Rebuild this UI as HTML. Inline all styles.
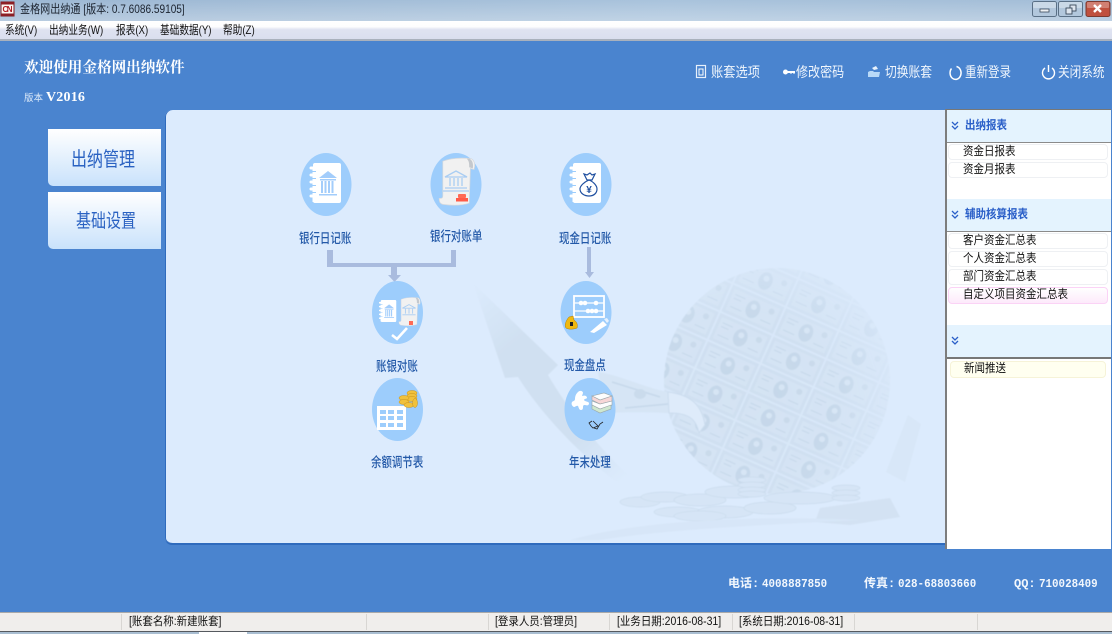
<!DOCTYPE html>
<html lang="zh"><head><meta charset="utf-8"><title>金格网出纳通</title>
<style>
html,body{margin:0;padding:0;width:1112px;height:634px;overflow:hidden;background:#4a84cf}
body{position:relative;font-family:"Liberation Sans","Noto Sans CJK SC",sans-serif}
div{position:absolute}
.t{position:absolute;white-space:nowrap;transform-origin:0 0;line-height:1}
.m{font-size:12px;color:#111;top:24px;transform:scaleX(.805)}
.tb{font-size:14px;color:#f0f6fd;top:65px;transform:scaleX(.86)}
.lb{font-size:13.5px;color:#2359a8;transform:scaleX(.775);font-weight:500}
.r{font-size:12px;color:#111;left:963px;transform:scaleX(.875)}
.rh{font-size:12px;color:#2a5fc8;font-weight:700;left:965px;transform:scaleX(.875)}
.it{left:948px;width:158px;border:1px solid #eef0f3;border-radius:4px;background:#fff}
.s{font-size:11.5px;color:#111;top:617px;transform:scaleX(.91)}
.ft{font-family:"Liberation Mono","Noto Sans CJK SC",monospace;font-weight:700;font-size:12px;color:#f2f7fd;top:578px}
.fn{transform:scaleX(.905)}
.sep{top:614px;width:1px;height:16px;background:#d8d6d3}
</style></head><body>
<div style="left:0;top:0;width:1112px;height:21px;background:linear-gradient(90deg,#9cb7d3,#a9c3dc 60%,#a3bdd7)"></div>
<div style="left:0;top:0;width:1112px;height:21px;background:linear-gradient(180deg,rgba(255,255,255,0),rgba(255,255,255,.28))"></div>
<div style="left:0;top:21px;width:1112px;height:19px;background:linear-gradient(180deg,#fff 0,#fdfdfe 30%,#dfe3f1 45%,#d9deee 100%)"></div>
<div style="left:0;top:39px;width:1112px;height:2px;background:#a9b1bd"></div>

<div style="left:165px;top:110px;width:780px;height:433px;background:#dcebfd;border-radius:7px 0 0 7px;border-bottom:2px solid #2f6bbd;box-shadow:inset 1px 0 0 #2f6bbd"></div>

<div style="left:48px;top:129px;width:113px;height:57px;background:linear-gradient(180deg,#fff,#c9e2fb);border-bottom-left-radius:5px"></div>
<div style="left:48px;top:192px;width:113px;height:57px;background:linear-gradient(180deg,#fff,#c9e2fb);border-bottom-left-radius:5px"></div>

<div style="left:945px;top:109px;width:166px;height:440px;background:#fff;border-left:2px solid #7d7d7d;box-sizing:border-box;border-top:1px solid #777"></div>
<div style="left:947px;top:110px;width:164px;height:32px;background:#e4f3fe;border-bottom:1px solid #8b8b8b"></div>
<div style="left:947px;top:199px;width:164px;height:32px;background:#e4f3fe;border-bottom:1px solid #8b8b8b"></div>
<div style="left:947px;top:325px;width:164px;height:32px;background:#e4f3fe;border-bottom:2px solid #777"></div>
<div class="it" style="top:144px;height:14px"></div>
<div class="it" style="top:162px;height:14px"></div>
<div class="it" style="top:233px;height:14px"></div>
<div class="it" style="top:251px;height:14px"></div>
<div class="it" style="top:269px;height:14px"></div>
<div class="it" style="top:287px;height:15px;border-color:#fbd3f6;background:linear-gradient(180deg,#fff,#fdeafb)"></div>
<div class="it" style="left:950px;width:154px;top:361px;height:15px;border-color:#f6f3d8;background:#fffff0"></div>

<div style="left:0;top:612px;width:1112px;height:1px;background:#a9a9a9"></div>
<div style="left:0;top:613px;width:1112px;height:18px;background:#f0eeec"></div>
<div style="left:0;top:631px;width:1112px;height:1px;background:#55595f"></div>
<div style="left:0;top:632px;width:1112px;height:2px;background:#a9bed2"></div>
<div style="left:199px;top:632px;width:48px;height:2px;background:#fff"></div>
<div class="sep" style="left:121px"></div><div class="sep" style="left:366px"></div><div class="sep" style="left:488px"></div><div class="sep" style="left:609px"></div><div class="sep" style="left:732px"></div><div class="sep" style="left:854px"></div><div class="sep" style="left:977px"></div>

<svg width="1112" height="634" viewBox="0 0 1112 634" style="position:absolute;left:0;top:0">
<defs>
<pattern id="bill" width="58" height="31" patternUnits="userSpaceOnUse" patternTransform="rotate(24 777 383)">
<rect width="58" height="31" fill="#d8e7f8"/>
<rect x="1" y="1" width="56" height="29" fill="#cfdff0"/>
<rect x="4" y="4" width="50" height="23" fill="#d4e3f3"/>
<ellipse cx="29" cy="15.500" rx="7" ry="9" fill="#c5d7e9"/><circle cx="29" cy="13" r="3" fill="#d6e5f4"/>
<circle cx="47" cy="10" r="3" fill="#c8d9ea"/><path d="M7 9h11M7 13h8M7 22h12M40 22h11" stroke="#c4d6e8" stroke-width="1"/>
</pattern>
<radialGradient id="fade" cx=".36" cy=".6" r=".75"><stop offset="0" stop-color="#fff"/><stop offset=".55" stop-color="#fff" stop-opacity=".9"/><stop offset=".85" stop-color="#fff" stop-opacity=".45"/><stop offset="1" stop-color="#fff" stop-opacity=".1"/></radialGradient>
<mask id="gm"><circle cx="777" cy="381" r="113" fill="url(#fade)"/></mask>
<filter id="soft" x="-5%" y="-5%" width="110%" height="110%"><feGaussianBlur stdDeviation=".6"/></filter>
<linearGradient id="ar" x1="0" y1="0" x2=".7" y2="1"><stop offset="0" stop-color="#dcebfd"/><stop offset=".3" stop-color="#d0e0f1"/><stop offset=".75" stop-color="#d0e0f1"/><stop offset="1" stop-color="#dcebfd"/></linearGradient>
<g id="nb"><rect x="-13" y="-22" width="28" height="40" rx="2" fill="#fff"/><path d="M-13-17v34" stroke="#fff"/><g fill="none" stroke="#fff" stroke-width="3" stroke-linecap="round"><path d="M-15-17h5M-15-10h5M-15-3h5M-15 4h5M-15 11h5"/></g><path d="M-16-13.500h6M-16-6.500h6M-16 .5h6M-16 7.500h6" stroke="#9dcdfc" stroke-width="1"/></g>
<g id="bk" fill="#a3cdfb"><path d="M0-12L9-5H-9z"/><rect x="-8" y="-4" width="16" height="1.500"/><path d="M-7-2h2v12h-2zM-3.500-2h2v12h-2zM0-2h2v12h-2zM3.500-2h2v12h-2z"/><rect x="-9" y="11" width="18" height="1.500"/></g>
<g id="st"><path d="M-11-19C-3-22 5-22 13-21c3 2 3 6 2 9l-3-1-1 29c-6 2-14 2-22 1-3-1-3-3-3-5 2 0 3 0 3-2z" fill="#f1f1f1" stroke="#d5d8dc" stroke-width=".6"/><path d="M9-21c3-1 6 2 5 8l-3-1c0-3 0-5-2-7z" fill="#c4c8cd"/></g>
</defs>

<g filter="url(#soft)">
<!-- background arrow -->
<path d="M473 283L558 365 548 375C580 430 625 475 655 498L637 497C590 465 545 420 518 377L505 378z" fill="url(#ar)"/>
<!-- globe -->
<g mask="url(#gm)"><rect x="660" y="265" width="235" height="235" fill="url(#bill)"/></g>
<!-- bill ribbon -->
<path d="M598 372C620 375 645 388 668 392C690 394 702 405 705 420L700 432C695 420 690 415 668 413C640 412 625 412 612 413C605 400 600 385 598 372z" fill="#d6e5f5"/>
<path d="M612 382L660 397M625 408L668 404" stroke="#c6d8ea" stroke-width="1.500" fill="none"/>
<ellipse cx="640" cy="394" rx="6" ry="5" fill="#cadbec"/>
<path d="M668 392C692 395 702 406 705 425l-6 8c-3-14-10-20-30-20z" fill="#deebfa" stroke="#cbdcee"/>
<!-- flying bill -->
<path d="M908 415L921 424 905 482 886 472z" fill="#d8e7f8"/>
<!-- coins -->
<g fill="#d6e5f6" stroke="#cbdced" stroke-width=".7">
<ellipse cx="640" cy="502" rx="20" ry="5"/><ellipse cx="665" cy="497" rx="24" ry="5"/><ellipse cx="700" cy="500" rx="26" ry="6"/><ellipse cx="735" cy="492" rx="30" ry="6"/><ellipse cx="678" cy="512" rx="24" ry="5"/><ellipse cx="725" cy="512" rx="28" ry="6"/><ellipse cx="770" cy="508" rx="26" ry="6"/><ellipse cx="700" cy="516" rx="26" ry="5"/><ellipse cx="800" cy="498" rx="36" ry="6"/>
<ellipse cx="752" cy="480" rx="14" ry="3"/><ellipse cx="752" cy="485" rx="14" ry="3"/><ellipse cx="752" cy="490" rx="14" ry="3"/><ellipse cx="752" cy="494" rx="14" ry="3"/>
<ellipse cx="846" cy="488" rx="14" ry="3"/><ellipse cx="846" cy="493" rx="14" ry="3"/><ellipse cx="846" cy="498" rx="14" ry="3"/>
</g>
<path d="M820 508L890 498 900 517 850 525 815 522z" fill="#d3e2f3"/>
<path d="M570 540C640 520 760 515 860 520C760 525 660 530 600 540z" fill="#d7e6f8"/>
</g>

<!-- connectors -->
<g fill="#a9bbde">
<rect x="327" y="250" width="6" height="17"/><rect x="327" y="263" width="129" height="4"/><rect x="451" y="250" width="5" height="17"/>
<rect x="391" y="267" width="6" height="9"/><path d="M388 275h13l-6.500 7z"/>
<rect x="587" y="247" width="4" height="25"/><path d="M585 272h9l-4.500 6z"/>
</g>

<!-- ovals -->
<g fill="#9dcdfc">
<ellipse cx="326" cy="184.500" rx="25.500" ry="31.500"/><ellipse cx="456" cy="184.500" rx="25.500" ry="31.500"/><ellipse cx="586" cy="184.500" rx="25.500" ry="31.500"/>
<ellipse cx="397.500" cy="312.500" rx="25.500" ry="31.500"/><ellipse cx="586" cy="312.500" rx="25.500" ry="31.500"/>
<ellipse cx="397.500" cy="409.500" rx="25.500" ry="31.500"/><ellipse cx="590" cy="409.500" rx="25.500" ry="31.500"/>
</g>

<!-- 1 bank notebook -->
<use href="#nb" x="326" y="185"/><use href="#bk" x="328" y="183"/>
<!-- 2 statement -->
<g transform="translate(456 184) scale(1.200)"><use href="#st"/></g>
<g transform="translate(456 180)" fill="none" stroke="#a9cdf3" stroke-width="1.300"><path d="M-11-3L0-9 11-3zM-6-2v8M-2-2v8M2-2v8M6-2v8M-11 8h22M-13 11h26"/></g>
<rect x="458" y="194" width="8" height="4" rx="1" fill="#ff6a55"/><rect x="456" y="198" width="12" height="3.500" fill="#ff5a48"/>
<!-- 3 money bag notebook -->
<use href="#nb" x="586" y="185"/>
<g transform="translate(0 -4)" fill="#fff" stroke="#1f4f9f" stroke-width="1.200"><path d="M589 184c-5 2-9 6-9 9 0 4 4 7 9 7s8-3 8-7c0-3-3-7-8-9z"/><path d="M584 178l3 1 3-2 2 2 3-1-3 6h-5z"/></g>
<text x="589" y="193" font-size="10" font-weight="700" fill="#1f4f9f" text-anchor="middle" font-family="Liberation Sans">¥</text>
<!-- 4 reconcile -->
<g transform="translate(388 311) scale(.55)"><use href="#nb" x="0" y="2"/><use href="#bk" x="2" y="0"/></g>
<g transform="translate(409 313) scale(.72)"><use href="#st"/></g>
<g transform="translate(409 310) scale(.6)" fill="none" stroke="#a9cdf3" stroke-width="1.500"><path d="M-11-3L0-9 11-3zM-6-2v8M0-2v8M6-2v8M-11 8h22"/></g>
<rect x="409" y="321" width="4" height="4" fill="#ff6a55"/>
<path d="M392 335l5 4 10-11" fill="none" stroke="#fff" stroke-width="2.600"/>
<!-- 5 abacus -->
<rect x="574" y="296" width="30" height="21" fill="none" stroke="#fff" stroke-width="1.800"/>
<path d="M574 303h30M574 311h30" stroke="#fff" stroke-width="1.200"/>
<g fill="#fff"><circle cx="581" cy="303" r="2.300"/><circle cx="585" cy="303" r="2.300"/><circle cx="596" cy="303" r="2.300"/><circle cx="588" cy="311" r="2.300"/><circle cx="592" cy="311" r="2.300"/><circle cx="596" cy="311" r="2.300"/></g>
<path d="M590 332l13-11 4 4-13 8z" fill="#fff"/><path d="M604 319l3-1 2 3-2 2z" fill="#e8f2fd"/>
<path d="M569 317l4-1 1 4c3 2 4 5 3 8-2 1-8 2-11 0-2-2 0-8 3-11z" fill="#f0b90f" stroke="#b27d08" stroke-width=".5"/><rect x="570" y="322" width="3" height="4" fill="#222"/>
<!-- 6 table + coins -->
<rect x="377" y="406" width="29" height="24" fill="#fff"/>
<g fill="#9dcdfc"><rect x="380" y="410" width="6" height="4"/><rect x="388" y="410" width="6" height="4"/><rect x="397" y="410" width="6" height="4"/><rect x="380" y="416" width="6" height="4"/><rect x="388" y="416" width="6" height="4"/><rect x="397" y="416" width="6" height="4"/><rect x="380" y="423" width="6" height="4"/><rect x="388" y="423" width="6" height="4"/><rect x="397" y="423" width="6" height="4"/></g>
<g fill="#f0c13c" stroke="#c8921b" stroke-width=".5"><ellipse cx="412" cy="393" rx="5" ry="2.500"/><ellipse cx="412" cy="396" rx="5" ry="2.500"/><ellipse cx="412" cy="399" rx="5" ry="2.500"/><ellipse cx="404" cy="398" rx="5" ry="2.500"/><ellipse cx="404" cy="402" rx="5" ry="2.500"/><ellipse cx="409" cy="405" rx="5" ry="2.500"/><ellipse cx="415" cy="403" rx="2.500" ry="4.500"/></g>
<!-- 7 puzzle books glasses -->
<path d="M578 392c2-2 5-1 5 1l-1 3c3-1 5 0 5 2-1 1-3 1-3 2 1 2 4 1 5 3 0 2-1 3-4 2-1 0-2 0-2 2 0 1 0 3-2 3-2 0-2-2-3-4-1-1-3 1-4 1-2-1-3-3-2-5 1-1 3-1 3-3 0-3 1-5 3-7z" fill="#fff"/>
<g stroke="#9aa5a8" stroke-width=".6"><path d="M592 396l12-3 8 3-12 4z" fill="#fdfdfd"/><path d="M592 396v4l8 4 12-3v-5l-12 4z" fill="#f7d7d7"/><path d="M592 401v4l8 4 12-4v-4l-12 3z" fill="#fdfdfd"/><path d="M592 405v4l8 4 11-4v-4l-11 4z" fill="#cfe8cf"/></g>
<g fill="none" stroke="#222" stroke-width=".8"><path d="M592 421l-3 2 2 3 2 2 5-2-5-5M594 428l3 1 3-5 3-2"/></g>

<!-- right panel chevrons -->
<g fill="none" stroke="#2a5fc8" stroke-width="1.300">
<path d="M952 122l3 3 3-3M952 126l3 3 3-3"/><path d="M952 211l3 3 3-3M952 215l3 3 3-3"/><path d="M952 337l3 3 3-3M952 341l3 3 3-3"/>
</g>

<!-- logo -->
<rect x="1" y="2" width="13" height="14" fill="#fbf7f3" stroke="#7c1d22"/>
<rect x="1" y="2" width="13" height="2.500" fill="#8c1f25"/><rect x="1" y="13.500" width="13" height="2.500" fill="#8c1f25"/>
<text x="2.500" y="12" font-size="8" font-weight="700" fill="#b01c24" font-family="Liberation Sans" textLength="10">CN</text>

<!-- window buttons -->
<g stroke="#5a7086"><rect x="1032.500" y="1.500" width="24" height="15" rx="2" fill="#b2c7dc"/><rect x="1058.500" y="1.500" width="24" height="15" rx="2" fill="#b2c7dc"/><rect x="1086" y="1.500" width="24" height="15" rx="2" fill="#c0503e" stroke="#7c3a30"/></g>
<rect x="1033" y="2" width="23" height="6" rx="1" fill="#fff" opacity=".32"/><rect x="1059" y="2" width="23" height="6" rx="1" fill="#fff" opacity=".32"/><rect x="1087" y="2" width="22" height="6" rx="1" fill="#fff" opacity=".28"/>
<rect x="1040" y="9" width="9" height="3" fill="#eef1f4" stroke="#39495a" stroke-width=".8"/>
<g fill="#dde5ee" stroke="#39495a" stroke-width=".9"><rect x="1070" y="5" width="6" height="6"/><rect x="1066" y="8" width="6" height="6"/></g>
<path d="M1094 5l7 7M1101 5l-7 7" stroke="#fff" stroke-width="2.400"/>

<!-- toolbar icons -->
<rect x="696.500" y="65.500" width="9" height="12" fill="none" stroke="#e7f0fb" stroke-width="1.200"/><rect x="699" y="69" width="4" height="6" fill="none" stroke="#fff"/>
<path d="M785 72h10" stroke="#fff" stroke-width="2"/><circle cx="785.500" cy="72" r="2.500" fill="#fff"/><path d="M791 72v2M794 72v2" stroke="#fff"/>
<path d="M868 77v-5l2-1h3l1 1h6l-1 5z" fill="#b9d9f7"/><path d="M872 68l4-2 2 3-4 1z" fill="#e8f2fc"/>
<path d="M951.500 68.500a5.500 6.500 0 1 0 5-2" fill="none" stroke="#fff" stroke-width="1.500"/>
<path d="M1045 68a6 6 0 1 0 7 0" fill="none" stroke="#fff" stroke-width="1.400"/><path d="M1048.500 65v7" stroke="#fff" stroke-width="1.400"/>
</svg>

<!-- text -->
<span class="t" style="left:20px;top:3px;font-size:12px;color:#1c2430;transform:scaleX(.84)">金格网出纳通 [版本: 0.7.6086.59105]</span>
<span class="t m" style="left:5px">系统(V)</span>
<span class="t m" style="left:49px">出纳业务(W)</span>
<span class="t m" style="left:116px">报表(X)</span>
<span class="t m" style="left:160px">基础数据(Y)</span>
<span class="t m" style="left:223px">帮助(Z)</span>

<span class="t" style="left:24px;top:61px;font-family:'Liberation Serif','Noto Serif CJK SC',serif;font-size:14.600px;color:#fff;font-weight:700">欢迎使用金格网出纳软件</span>
<span class="t" style="left:24px;top:94px;font-size:9.500px;color:#dce9f8">版本</span>
<span class="t" style="left:46px;top:91px;font-family:'Liberation Serif',serif;font-size:14px;font-weight:700;color:#fff;letter-spacing:.2px">V2016</span>

<span class="t tb" style="left:711px;transform:scaleX(.875)">账套选项</span>
<span class="t tb" style="left:796px">修改密码</span>
<span class="t tb" style="left:885px;transform:scaleX(.84)">切换账套</span>
<span class="t tb" style="left:965px;transform:scaleX(.82)">重新登录</span>
<span class="t tb" style="left:1058px;transform:scaleX(.83)">关闭系统</span>

<span class="t" style="left:71px;top:150px;font-size:20px;color:#2a62c2;transform:scaleX(.8)">出纳管理</span>
<span class="t" style="left:76px;top:212px;font-size:19px;color:#2a62c2;transform:scaleX(.79)">基础设置</span>

<span class="t lb" style="left:299px;top:232px">银行日记账</span>
<span class="t lb" style="left:430px;top:230px">银行对账单</span>
<span class="t lb" style="left:559px;top:232px">现金日记账</span>
<span class="t lb" style="left:376px;top:360px">账银对账</span>
<span class="t lb" style="left:564px;top:359px">现金盘点</span>
<span class="t lb" style="left:371px;top:456px">余额调节表</span>
<span class="t lb" style="left:569px;top:456px">年末处理</span>

<span class="t rh" style="top:119px">出纳报表</span>
<span class="t rh" style="top:208px">辅助核算报表</span>
<span class="t r" style="top:145px">资金日报表</span>
<span class="t r" style="top:163px">资金月报表</span>
<span class="t r" style="top:234px">客户资金汇总表</span>
<span class="t r" style="top:252px">个人资金汇总表</span>
<span class="t r" style="top:270px">部门资金汇总表</span>
<span class="t r" style="top:288px">自定义项目资金汇总表</span>
<span class="t r" style="left:964px;top:362px">新闻推送</span>

<span class="t ft" style="left:728px">电话:</span><span class="t ft fn" style="left:762px">4008887850</span>
<span class="t ft" style="left:864px">传真:</span><span class="t ft fn" style="left:898px">028-68803660</span>
<span class="t ft" style="left:1014px">QQ:</span><span class="t ft fn" style="left:1039px">710028409</span>

<span class="t s" style="left:129px">[账套名称:新建账套]</span>
<span class="t s" style="left:495px">[登录人员:管理员]</span>
<span class="t s" style="left:617px">[业务日期:2016-08-31]</span>
<span class="t s" style="left:739px">[系统日期:2016-08-31]</span>
</body></html>
